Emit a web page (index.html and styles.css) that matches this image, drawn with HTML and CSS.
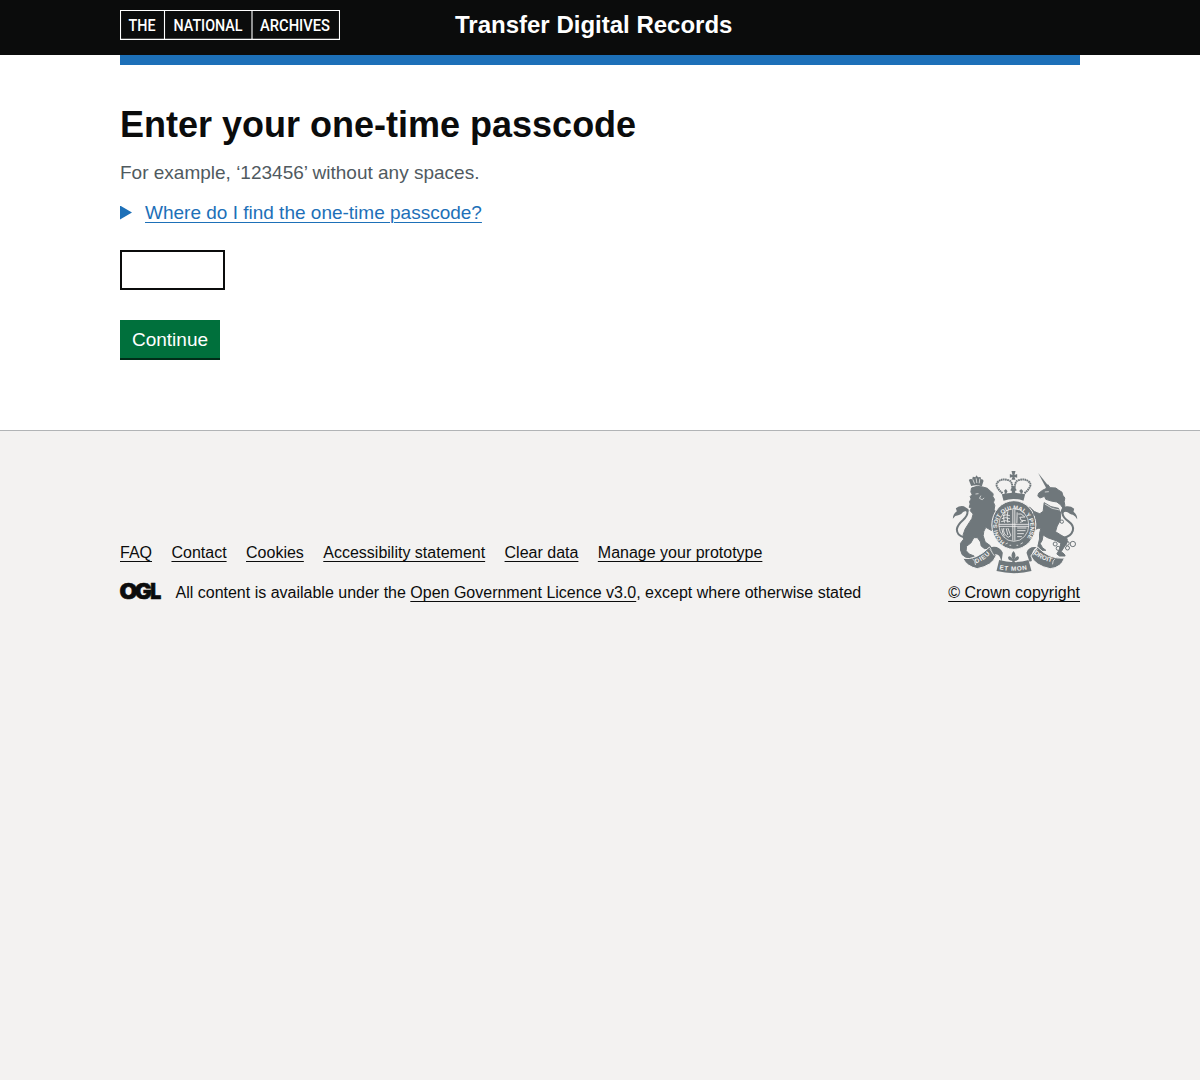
FILE: index.html
```html
<!DOCTYPE html>
<html lang="en">
<head>
<meta charset="utf-8">
<title>Enter your one-time passcode</title>
<link rel="stylesheet" href="styles.css">
</head>
<body>
<header class="header">
  <div class="container header-inner">
    <a class="logo" aria-label="The National Archives">
      <svg width="220" height="30" viewBox="0 0 220 30">
        <path class="logo-frame" d="M.5.5h219v28.9H.5zM44.5.5v29M132 .5v29"/>
        <g class="logo-text">
          <text x="8.5" y="20.8" textLength="27" lengthAdjust="spacingAndGlyphs">THE</text>
          <text x="53.5" y="20.8" textLength="69" lengthAdjust="spacingAndGlyphs">NATIONAL</text>
          <text x="140" y="20.8" textLength="70" lengthAdjust="spacingAndGlyphs">ARCHIVES</text>
        </g>
      </svg>
    </a>
    <span class="service">Transfer Digital Records</span>
  </div>
</header>
<div class="container"><div class="brand-bar"></div></div>
<main class="container main">
  <h1>Enter your one-time passcode</h1>
  <p class="hint">For example, ‘123456’ without any spaces.</p>
  <div class="details"><span class="arrow"></span><a class="details-link">Where do I find the one-time passcode?</a></div>
  <input class="code" type="text" aria-label="Passcode">
  <button class="button" type="button">Continue</button>
</main>
<footer class="footer">
  <div class="container footer-inner">
    <div class="meta">
      <nav class="links">
        <a>FAQ</a><a>Contact</a><a>Cookies</a><a>Accessibility statement</a><a>Clear data</a><a>Manage your prototype</a>
      </nav>
      <div class="licence">
        <svg class="ogl" width="41" height="17" viewBox="0 0 41 17"><text y="16"><tspan x="-.5" textLength="18" lengthAdjust="spacingAndGlyphs">O</tspan><tspan x="14.8" textLength="17" lengthAdjust="spacingAndGlyphs">G</tspan><tspan x="30.2" textLength="11" lengthAdjust="spacingAndGlyphs">L</tspan></text></svg>
        <span>All content is available under the <a>Open Government Licence v3.0</a>, except where otherwise stated</span>
      </div>
    </div>
    <div class="crown">
      <svg class="crest" width="125" height="102" viewBox="10.5 9 375 306">
        <defs>
          <path id="garter" d="M169 222A50 53 0 1 1 223 222"/>
          <path id="dieu" d="M82 286Q109 278 127 254"/>
          <path id="mon" d="M152 304Q195 313 238 304"/>
          <path id="droit" d="M256 256Q276 276 311 283"/>
        </defs>
        <g class="ink">
          <!-- Lion -->
          <path d="M68 54L61 36q4-5 10-2l2-8 8 2 2-6 6 6 7-1 2 7q7-1 7 5l-5 16q-16-6-32-1z"/>
          <path class="body" d="M69 60Q86 52 103 57L117 61 126 70 134 77 133 86 138 94 135 103 139 113 137 124 144 136 137 147 137 160 140 172 136 186 128 187 112 178 106 190 104 203 110 222 124 232 129 240 108 242 98 234 96 222 87 209 76 209 67 225 54 235 53 248 62 258 77 264 75 270 55 270 41 260 36 246 36 226 45 214 44 200 50 183 62 164 70 152 74 138 65 128 69 120 62 118 65 108 63 101 68 93 65 86 71 79 67 72z"/>
          <path class="line tail" d="M46 208Q25 202 25 184Q27 171 43 157Q58 143 57 131Q52 121 39 130"/>
          <path d="M13 152q0-13 12-22l-3-9q12-9 24-6l13 8q3 4 1 8-13-7-22 7-5 2-9 4-9 0-16 10z"/>
          <!-- Unicorn -->
          <path d="M269 15l31 39-7 6z"/>
          <path class="body" d="M292 62L298 50 305 59 322 60 331 67 340 72 343 82 349 90 347 101 349 112 345 123 336 110 325 102 308 99 292 94 288 85 274 90 268 84 270 76 282 67z"/>
          <path class="body" d="M287 104Q306 119 330 121L337 136 335 158 326 174 321 191 337 201 356 212 356 224 345 240 338 251 347 258 350 264 333 264 325 258 333 244 337 226 323 218 297 209 284 201 281 217 275 227 282 239 292 247 278 247 268 235 273 213 273 197 277 181 269 181 248 189 243 200 236 197 240 180 266 169 258 162 255 149 247 147 241 136 231 130 233 120 244 118 259 132 274 137 284 130z"/>
          <path class="line tail" d="M346 209Q367 206 373 188Q378 173 360 160Q343 149 342 135Q345 121 360 130"/>
          <path d="M386 154q1-14-11-23l2-9q-10-8-22-7-15 1-18 13 0 5 3 9 11-12 24 0 5 3 9 3 8 4 13 14z"/>
          <!-- Crown -->
          <path d="M160 79q35-9 70 0l-5 19q-30-10-60 0z"/>
          <path class="line dotted" d="M162 76Q136 53 148 42Q162 29 183 38Q193 43 191 64M228 76Q254 53 242 42Q228 29 207 38Q198 43 199 64"/>
          <path d="M189 35l3-8-8 2V18l8 3-3-12h12l-3 12 8-3v11l-8-2 3 8zM189 76q4-8-4-9l10-14 10 14q-8 1-4 9zM168 77q2-6-2-8l6-6 5 7-4 8zM217 77q-2-6-5-8l6-6 6 6-3 8z"/>
          <!-- Garter -->
          <ellipse class="gap" cx="196" cy="171" rx="66" ry="73"/>
        </g>
        <ellipse class="light-line" cx="196" cy="171" rx="45" ry="49"/>
        <g class="light-line shield">
          <path d="M193 124v94M199 124v94M151 169h90M151 175h90M163 143q9-5 21 0M160 152q11-6 24 0M158 161q12-6 27 0M167 137q-4 13 1 27M178 130q-4 15 0 34M206 133l-1 33M209 138h9l11 9-15 1 4 9 14 1M215 163l9-3M166 180q-4 17 13 28l8-5-9-23M173 181l5 20M206 180l28 0M206 188l25 0M206 197l20 0M206 206l14 0M160 181q2 17 8 24"/>
        </g>
        <path class="light-line" d="M171 228l7-3M183 232h5M204 232h5M216 228l7-4"/>
        <g class="ink">
          <!-- Ribbon -->
          <path class="gap" d="M43 271Q83 278 123 237L143 263Q132 293 86 302Q54 295 43 271z"/>
          <path d="M125 238q26-7 38 16l-4 27q-6-28-23-21z"/>
          <path d="M152 276q43 13 88 0l9 33q-53 13-105 0zM243 281l-9-27q7-20 31-16-20 12-15 41z"/>
          <path class="gap" d="M267 237Q302 275 348 270Q338 299 305 302Q260 293 247 264z"/>
          <!-- Lily -->
          <path d="M195 249q11 11 2 25 8-14 14-7 2 11-13 12l4 9h-14l4-9q-15-1-13-12 6-7 14 7-9-14 2-25z"/>
        </g>
        <path class="light-line" d="M71 271q10 7 10 20M124 243l13 20M267 243l-13 19M320 272q-8 5-8 17M81 78l9-1M97 83l-4 8 8 4 6-5M73 34l5 13M83 31l2 14M94 32l-2 14M290 100q23 14 45 17M289 108q21 17 45 18M289 72l12-1"/>
        <g class="crest-text">
          <text class="garter-text" textLength="248" lengthAdjust="spacingAndGlyphs"><textPath href="#garter">HONI SOIT QUI MAL Y PENSE</textPath></text>
          <text textLength="52"><textPath href="#dieu">DIEU</textPath></text>
          <text textLength="84"><textPath href="#mon">ET MON</textPath></text>
          <text textLength="60"><textPath href="#droit">DROIT</textPath></text>
        </g>
        <!-- Chain -->
        <g class="line">
          <circle cx="320" cy="228" r="6"/><circle cx="329" cy="241" r="6"/><circle cx="356" cy="226" r="6"/><circle cx="373" cy="228" r="8"/><circle cx="357" cy="240" r="6"/><circle cx="267" cy="150" r="5"/><circle cx="260" cy="137" r="5"/><circle cx="340" cy="161" r="5"/>
        </g>
      </svg>
      <a>© Crown copyright</a>
    </div>
  </div>
</footer>
</body>
</html>
```

FILE: styles.css
```css
* { box-sizing: border-box; }
html { background: #f3f2f1; }
body {
  margin: 0;
  background: #fff;
  color: #0b0c0c;
  font-family: "Liberation Sans", Arial, sans-serif;
  font-size: 19px;
  line-height: 25px;
}
.container { width: 960px; margin: 0 auto; }
.header { height: 55px; background: #0b0c0c; color: #fff; }
.header-inner { display: flex; padding-top: 10px; }
.logo { width: 335px; height: 30px; }
.logo svg { display: block; }
.logo-frame { fill: none; stroke: #fff; stroke-width: 1.1; }
.logo-text { fill: #fff; font-family: Roboto, sans-serif; font-size: 16.5px; font-weight: 500; }
.service { font-size: 24px; font-weight: 700; line-height: 30px; }
.brand-bar { height: 10px; background: #1d70b8; }
.main { display: flex; flex-direction: column; align-items: flex-start; height: 365px; padding-top: 40px; }
h1 { margin: 0 0 15px; font-size: 36px; line-height: 40px; font-weight: 700; }
.hint { margin: 0 0 15px; color: #505a5f; }
.details { display: flex; align-items: center; gap: 13px; margin-bottom: 25px; color: #1d70b8; }
.arrow { width: 12px; height: 14px; background: #1d70b8; clip-path: polygon(0 0, 100% 50%, 0 100%); }
a { text-decoration: underline; text-decoration-thickness: 1px; text-underline-offset: 2.5px; }
.code { width: 105px; height: 40px; padding: 5px; border: 2px solid #0b0c0c; border-radius: 0; font: inherit; }
.button { width: 100px; height: 40px; margin-top: 30px; padding: 0 0 2px; border: 0; background: #00703c; color: #fff; box-shadow: inset 0 -2px 0 #002d18; font: inherit; }
.footer { height: 650px; padding-top: 40px; border-top: 1px solid #b1b4b6; background: #f3f2f1; font-size: 16px; line-height: 20px; }
.footer a { text-underline-offset: 3px; }
.footer-inner { display: flex; justify-content: space-between; align-items: flex-end; }
.links { display: flex; gap: 19.45px; margin-bottom: 20px; }
.licence { display: flex; gap: 14.5px; }
.ogl { overflow: visible; }
.ogl text { fill: #0b0c0c; stroke: #0b0c0c; stroke-width: .6; font-family: Inter, sans-serif; font-size: 21px; font-weight: 900; }
.crown { display: flex; flex-direction: column; align-items: center; gap: 10px; }
.crest { overflow: visible; }
.ink { fill: #6f777b; }
.body { stroke: #6f777b; stroke-width: 3; }
.gap { stroke: #f3f2f1; stroke-width: 3; }
.line { fill: none; stroke: #6f777b; stroke-width: 3; }
.tail { stroke-width: 6; }
.dotted { stroke-width: 6; stroke-dasharray: 5 1.5; }
.light-line { fill: none; stroke: #f3f2f1; stroke-width: 2.2; }
.shield { stroke-width: 2.6; }
.crest-text { fill: #f3f2f1; font-family: "Liberation Sans", sans-serif; font-weight: 700; font-size: 19px; }
.garter-text { font-size: 17px; }
```
